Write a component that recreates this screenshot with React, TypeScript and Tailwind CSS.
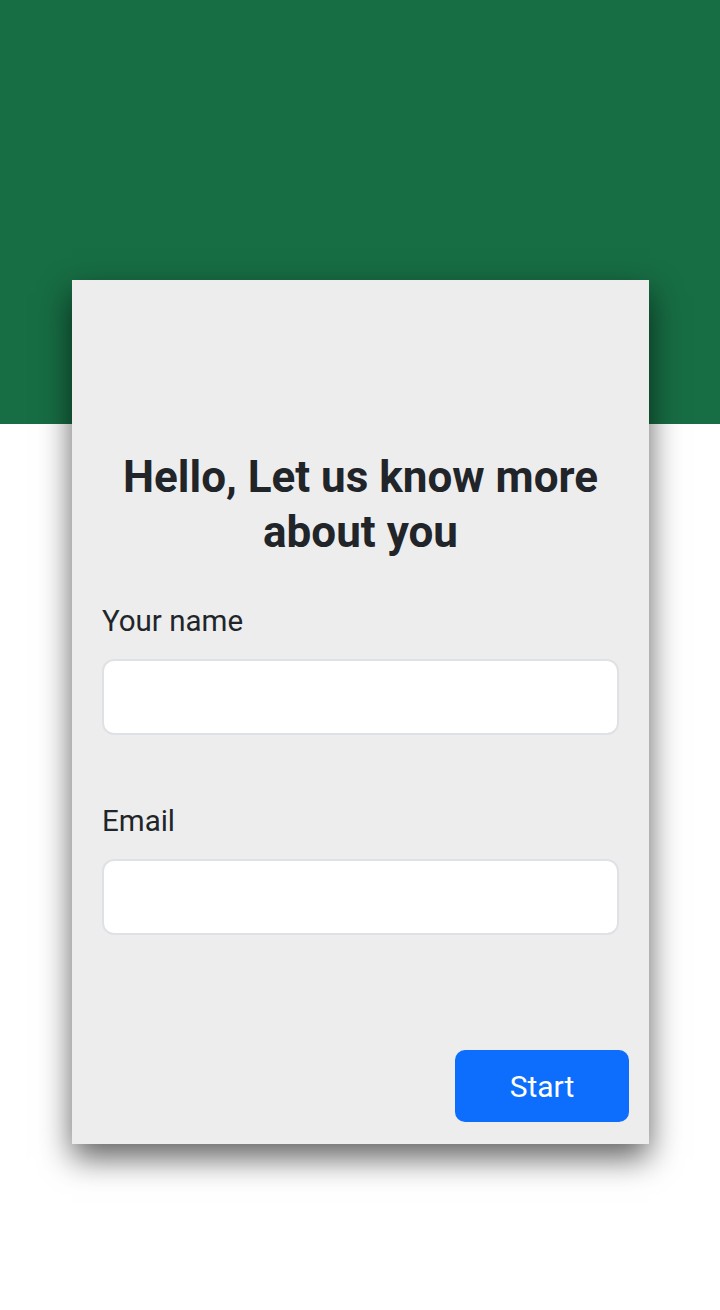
export default function App() {
  return (
    <div className="min-h-screen bg-white font-['Roboto',sans-serif] text-[#212529]">
      {/* Header band */}
      <div className="h-[424px] bg-[#176d44]" />

      {/* Card */}
      <div className="relative z-10 ml-[72px] -mt-[144px] flex h-[864px] w-[577px] flex-col bg-[#ededed] px-[30px] pt-[170px] pb-[22px] shadow-[0_14px_30px_rgba(0,0,0,0.62)]">
        <h1 className="text-center text-[44px] font-bold leading-[55px]">
          Hello, Let us know more about you
        </h1>

        <form className="mt-[41px] flex flex-col">
          <label className="text-[29.5px] leading-[40px]">Your name</label>
          <input
            type="text"
            className="mt-[18px] h-[76px] w-full rounded-[12px] border-2 border-[#dee2e6] bg-white px-4 text-[24px] outline-none"
          />
          <label className="mt-[66px] text-[29.5px] leading-[40px]">Email</label>
          <input
            type="email"
            className="mt-[18px] h-[76px] w-full rounded-[12px] border-2 border-[#dee2e6] bg-white px-4 text-[24px] outline-none"
          />
        </form>

        <div className="mt-auto flex justify-end -mr-[10px]">
          <button className="h-[72px] w-[174px] rounded-[10px] bg-[#0d6efd] text-[30px] text-white">
            Start
          </button>
        </div>
      </div>
    </div>
  );
}
